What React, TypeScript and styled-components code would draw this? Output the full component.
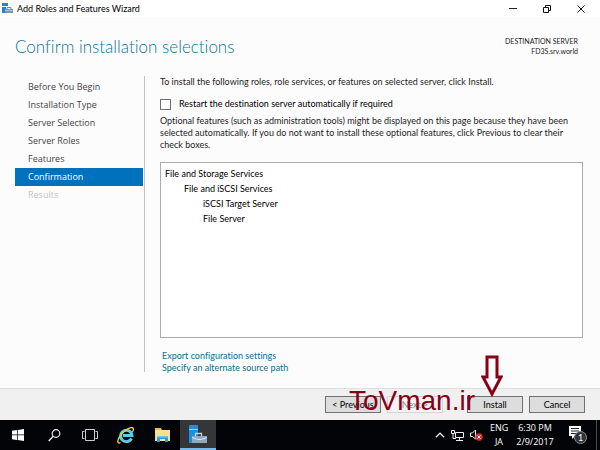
import React from "react";
import styled, { createGlobalStyle } from "styled-components";

const GlobalStyle = createGlobalStyle`
  *, *::before, *::after { box-sizing: border-box; }
  body { margin: 0; background: #fcfcfc; font: 9px/12px Lato, "Open Sans", sans-serif; font-variant-ligatures: none; color: #1c1c1c; }
  button, input { font: inherit; color: inherit; margin: 0; }
`;

const Screen = styled.div`
  min-height: 100vh;
  display: flex;
  flex-direction: column;
`;

const TitleBar = styled.header`
  height: 17px;
  flex: none;
  display: flex;
  align-items: center;
  gap: 4px;
  padding-left: 2px;
  background: #fff;
  color: #000;
`;

const WindowTitle = styled.span`
  flex: 1;
`;

const WindowButton = styled.button`
  width: 34px;
  height: 17px;
  padding: 0;
  border: 0;
  background: none;
  display: grid;
  place-items: center;
`;

const WindowButtons = styled.div`
  display: flex;
  padding-right: 2px;
`;

const Heading = styled.div`
  display: flex;
  justify-content: space-between;
  padding: 16px 22px 0 15px;
  height: 59px;
`;

const Title = styled.h1`
  margin: 0;
  font-size: 17px;
  font-weight: 300;
  line-height: 28px;
  color: #0f7499;
`;

const Destination = styled.div`
  font-size: 7px;
  line-height: 10px;
  padding-top: 3px;
  text-align: right;
`;

const Body = styled.div`
  flex: 1;
  display: flex;
`;

const Steps = styled.nav`
  width: 145px;
  flex: none;
  padding: 2px 1px 0 15px;
  border-right: 1px solid #c3c3c3;
  margin-bottom: 16px;
`;

const Step = styled.a<{ $state?: "active" | "disabled" }>`
  display: block;
  height: 18px;
  padding-left: 13px;
  font-family: "Open Sans", "Noto Sans", sans-serif;
  line-height: 18px;
  text-decoration: none;
  background: ${(p) => (p.$state === "active" ? "#0072bd" : "none")};
  color: ${(p) => (p.$state === "active" ? "#fff" : p.$state === "disabled" ? "#c4c4c4" : "#444")};
`;

const Content = styled.main`
  flex: 1;
  min-width: 0;
  display: flex;
  flex-direction: column;
  padding: 0 17px 14px 15px;
`;

const Paragraph = styled.p`
  margin: 0;
`;

const CheckLabel = styled.label`
  display: flex;
  align-items: center;
  gap: 8px;
  margin: 10px 0 5px;
  color: #000;
`;

const CheckBox = styled.input`
  appearance: none;
  width: 11px;
  height: 11px;
  border: 1px solid #707070;
  background: #fff;
`;

const Selections = styled.ul`
  flex: 1;
  margin: 11px 0 12px;
  padding: 3px 4px;
  border: 1px solid #ababab;
  background: #fff;
  color: #000;
  list-style: none;
`;

const Selection = styled.li<{ $depth: number }>`
  padding-left: ${(p) => p.$depth * 19}px;
  line-height: 15px;
`;

const Links = styled.div`
  display: flex;
  flex-direction: column;
  align-items: flex-start;
  padding-left: 2px;
`;

const Link = styled.a`
  color: #0f6d8d;
  text-decoration: none;
`;

const Footer = styled.footer`
  position: relative;
  flex: none;
  height: 32px;
  display: flex;
  justify-content: flex-end;
  align-items: center;
  gap: 24px;
  padding-right: 15px;
  background: #f0f0f0;
  border-top: 1px solid #dedede;
`;

const ButtonGroup = styled.div`
  display: flex;
  gap: 6px;
`;

const Button = styled.button`
  width: 56px;
  height: 17px;
  padding: 0;
  border: 1px solid #707070;
  background: #ddd;
  line-height: 15px;
  color: #000;
  &:disabled {
    border-color: #d4d4d4;
    background: #f4f4f4;
    color: #888;
  }
`;

const Watermark = styled.div`
  position: absolute;
  right: 125px;
  top: -4px;
  font: 28px/32px "Liberation Sans", Arial, sans-serif;
  color: #880015;
  pointer-events: none;
`;

const Pointer = styled.svg`
  position: absolute;
  right: 97px;
  top: -34px;
  pointer-events: none;
`;

const TaskBar = styled.div`
  flex: none;
  height: 30px;
  display: flex;
  justify-content: space-between;
  background: #020407;
  color: #fff;
`;

const TaskGroup = styled.div`
  display: flex;
  align-items: center;
`;

const TaskButton = styled.button<{ $active?: boolean }>`
  width: 36px;
  height: 30px;
  padding: 0;
  border: 0;
  border-bottom: ${(p) => (p.$active ? "2px solid #76b9ed" : "0")};
  background: ${(p) => (p.$active ? "#343638" : "none")};
  display: grid;
  place-items: center;
`;

const TrayButton = styled.button`
  height: 30px;
  padding: 0;
  border: 0;
  background: none;
  display: grid;
  place-items: center;
`;

const Tray = styled(TaskGroup)`
  border-right: 1px solid #45484b;
  margin-right: 3px;
  padding-right: 8px;
`;

const TrayText = styled.div<{ $wide?: boolean }>`
  width: ${(p) => (p.$wide ? 54 : 18)}px;
  margin-right: ${(p) => (p.$wide ? 6 : 0)}px;
  text-align: center;
  white-space: nowrap;
  font-family: "Open Sans", "Noto Sans", sans-serif;
  line-height: 14px;
`;

const TrayIcons = styled(TaskGroup)`
  gap: 6px;
  margin-right: 7px;
`;

const steps: { name: string; state?: "active" | "disabled" }[] = [
  { name: "Before You Begin" },
  { name: "Installation Type" },
  { name: "Server Selection" },
  { name: "Server Roles" },
  { name: "Features" },
  { name: "Confirmation", state: "active" },
  { name: "Results", state: "disabled" },
];

const selections = [
  { name: "File and Storage Services", depth: 0 },
  { name: "File and iSCSI Services", depth: 1 },
  { name: "iSCSI Target Server", depth: 2 },
  { name: "File Server", depth: 2 },
];

const WizardIcon = () => (
  <svg width="11" height="11" viewBox="0 0 11 11" aria-hidden="true">
    <path d="M0 0h6v3H0zM0 4h4v6H0z" fill="#168bd2" />
    <path d="M5 6V4.500h4V6" fill="none" stroke="#71899a" />
    <path d="M3 6h8v4H3z" fill="#7791a5" />
    <path d="M3 7.500h8" stroke="#d4dfe6" strokeWidth=".7" />
  </svg>
);

const ServerManagerIcon = () => (
  <svg width="18" height="19" viewBox="0 0 18 19" aria-hidden="true">
    <path d="M0 0h9v4H0zM0 5h9v13H0z" fill="#1b8fdd" />
    <path d="M0 4.500h9" stroke="#9bd1f4" />
    <path d="M6.500 11V8.500h6V11" fill="none" stroke="#c4d1dc" strokeWidth="1.300" />
    <path d="M3 11h15v7H3z" fill="#8fa9bd" />
    <path d="M3 12.500 9 14.500h3l6-2" fill="none" stroke="#dbe5ec" />
  </svg>
);

const StartIcon = () => (
  <svg width="12" height="12" viewBox="0 0 12 12" fill="#fff" aria-hidden="true">
    <path d="M0 1.700 5 1v4.600H0zM5.700.9 12 0v5.600H5.700zM0 6.300h5V11l-5-.7zM5.700 6.300H12V12l-6.300-.9z" />
  </svg>
);

const SearchIcon = () => (
  <svg width="13" height="13" viewBox="0 0 13 13" fill="none" stroke="#eee" aria-hidden="true">
    <circle cx="8" cy="4.500" r="3.800" strokeWidth="1.200" />
    <path d="M5.300 7.300.7 12" strokeWidth="1.400" />
  </svg>
);

const TaskViewIcon = () => (
  <svg width="16" height="12" viewBox="0 0 16 12" fill="none" stroke="#ccc" aria-hidden="true">
    <path d="M3.500.5h9v11h-9zM2.500 2.500h-2v7h2M13.500 2.500h2v7h-2" />
  </svg>
);

const ExplorerIcon = () => (
  <svg width="17" height="16" viewBox="0 0 17 16" aria-hidden="true">
    <path d="M1 1h6l1 2h8v11H1z" fill="#e8bd50" />
    <path d="M1 3h15v11H1z" fill="#fbdf8b" />
    <path d="M3 9h11v6h-3v-3H6v3H3z" fill="#3299d6" />
    <path d="M3 9h11v1.500H3z" fill="#76c5ed" />
  </svg>
);

const BrowserIcon = () => (
  <svg width="18" height="17" viewBox="0 0 18 17" fill="none" aria-hidden="true">
    <path d="M14.500 11.300A5.700 5.700 0 1 1 15 8.500H6" stroke="#5fc9f3" strokeWidth="2.900" />
    <path d="M3.500 15.700C-.5 17 .2 12.600 4 7.700 8.300 2.300 15-.9 16.200 1.300c.6 1-.1 2.500-.8 3.500" stroke="#f5c33c" strokeWidth="1.400" />
  </svg>
);

const MinimizeIcon = () => (
  <svg width="8" height="8" viewBox="0 0 8 8" stroke="#222" aria-hidden="true">
    <path d="M0 3.500h8" />
  </svg>
);

const RestoreIcon = () => (
  <svg width="8" height="8" viewBox="0 0 8 8" fill="none" stroke="#111" aria-hidden="true">
    <path d="M.5 2.500h5v5h-5zM2.500 2V.5h5v5H6" />
  </svg>
);

const CloseIcon = () => (
  <svg width="8" height="8" viewBox="0 0 8 8" stroke="#111" aria-hidden="true">
    <path d="m.5.5 7 7m0-7-7 7" />
  </svg>
);

const ChevronIcon = () => (
  <svg width="10" height="6" viewBox="0 0 10 6" fill="none" stroke="#eee" strokeWidth="1.200" aria-hidden="true">
    <path d="m.8 5.200 4.200-4 4.200 4" />
  </svg>
);

const NetworkIcon = () => (
  <svg width="13" height="11" viewBox="0 0 13 11" fill="none" stroke="#eee" aria-hidden="true">
    <path d="M4.500 2.500h8v5h-8zM8.500 8v2M5 10.500h7M.5.500h3v3h-3zM2 4v4.500h3" />
  </svg>
);

const MutedIcon = () => (
  <svg width="13" height="12" viewBox="0 0 13 12" fill="none" aria-hidden="true">
    <path d="M.5 4v3.500h2L5.500 10V1L2.500 4z" stroke="#eee" />
    <circle cx="9" cy="8" r="3.700" fill="#e2262e" />
    <path d="m7.500 6.500 3 3m0-3-3 3" stroke="#fff" />
  </svg>
);

const NoticeIcon = () => (
  <svg width="20" height="20" viewBox="0 0 20 20" aria-hidden="true">
    <path d="M1 1h12v10H7l-3 3v-3H1z" fill="#fff" />
    <path d="M3 3.500h8M3 6h8M3 8.500h5" stroke="#222" />
    <circle cx="12.500" cy="12.500" r="6" fill="#303337" stroke="#8a8d90" />
    <text x="12.500" y="16" textAnchor="middle" fontSize="9" fill="#fff">1</text>
  </svg>
);

export default function App() {
  return (
    <Screen>
      <GlobalStyle />
      <TitleBar>
        <WizardIcon />
        <WindowTitle>Add Roles and Features Wizard</WindowTitle>
        <WindowButtons>
          <WindowButton aria-label="Minimize"><MinimizeIcon /></WindowButton>
          <WindowButton aria-label="Restore"><RestoreIcon /></WindowButton>
          <WindowButton aria-label="Close"><CloseIcon /></WindowButton>
        </WindowButtons>
      </TitleBar>
      <Heading>
        <Title>Confirm installation selections</Title>
        <Destination>
          <div>DESTINATION SERVER</div>
          <div>FD3S.srv.world</div>
        </Destination>
      </Heading>
      <Body>
        <Steps>
          {steps.map((s) => (
            <Step key={s.name} href="#" $state={s.state}>{s.name}</Step>
          ))}
        </Steps>
        <Content>
          <Paragraph>
            To install the following roles, role services, or features on selected server, click Install.
          </Paragraph>
          <CheckLabel>
            <CheckBox type="checkbox" />
            Restart the destination server automatically if required
          </CheckLabel>
          <Paragraph>
            Optional features (such as administration tools) might be displayed on this page because they have been
            <br />
            selected automatically. If you do not want to install these optional features, click Previous to clear their
            <br />
            check boxes.
          </Paragraph>
          <Selections>
            {selections.map((s) => (
              <Selection key={s.name} $depth={s.depth}>{s.name}</Selection>
            ))}
          </Selections>
          <Links>
            <Link href="#">Export configuration settings</Link>
            <Link href="#">Specify an alternate source path</Link>
          </Links>
        </Content>
      </Body>
      <Footer>
        <ButtonGroup>
          <Button>&lt; Previous</Button>
          <Button disabled>Next &gt;</Button>
        </ButtonGroup>
        <ButtonGroup>
          <Button>Install</Button>
          <Button>Cancel</Button>
        </ButtonGroup>
        <Watermark>ToVman.ir</Watermark>
        <Pointer width="22" height="42" viewBox="0 0 22 42" fill="#fcfcfc" stroke="#880015" strokeWidth="3" aria-hidden="true">
          <path d="M6 2h10v20h4l-9 17-9-17h4z" />
        </Pointer>
      </Footer>
      <TaskBar>
        <TaskGroup>
          <TaskButton aria-label="Start"><StartIcon /></TaskButton>
          <TaskButton aria-label="Search"><SearchIcon /></TaskButton>
          <TaskButton aria-label="Task view"><TaskViewIcon /></TaskButton>
          <TaskButton aria-label="Internet Explorer"><BrowserIcon /></TaskButton>
          <TaskButton aria-label="File Explorer"><ExplorerIcon /></TaskButton>
          <TaskButton aria-label="Server Manager" $active><ServerManagerIcon /></TaskButton>
        </TaskGroup>
        <Tray>
          <TrayIcons>
            <TrayButton aria-label="Show hidden icons"><ChevronIcon /></TrayButton>
            <TrayButton aria-label="Network"><NetworkIcon /></TrayButton>
            <TrayButton aria-label="Volume"><MutedIcon /></TrayButton>
          </TrayIcons>
          <TrayText>
            <div>ENG</div>
            <div>JA</div>
          </TrayText>
          <TrayText $wide>
            <div>6:30 PM</div>
            <div>2/9/2017</div>
          </TrayText>
          <TrayButton aria-label="Notifications"><NoticeIcon /></TrayButton>
        </Tray>
      </TaskBar>
    </Screen>
  );
}
